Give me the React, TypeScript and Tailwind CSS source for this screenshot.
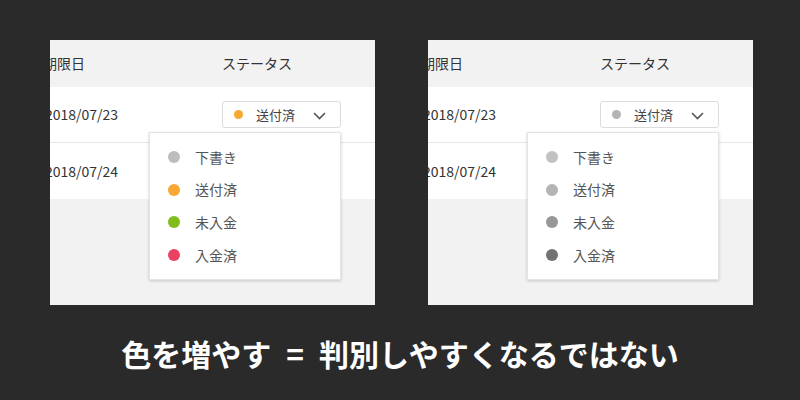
const font = { fontFamily: '"Noto Sans CJK JP", "Noto Sans", sans-serif' };

type Item = { label: string; color: string };

const colored: Item[] = [
  { label: "下書き", color: "bg-[#bdbdbd]" },
  { label: "送付済", color: "bg-[#f7a833]" },
  { label: "未入金", color: "bg-[#7fbc1c]" },
  { label: "入金済", color: "bg-[#e9415f]" },
];

const grey: Item[] = [
  { label: "下書き", color: "bg-[#c2c2c2]" },
  { label: "送付済", color: "bg-[#b4b4b4]" },
  { label: "未入金", color: "bg-[#979797]" },
  { label: "入金済", color: "bg-[#727272]" },
];

const Chevron = () => (
  <svg width="13" height="8" viewBox="0 0 13 8" fill="none">
    <path d="M1 1l5.5 5.5L12 1" stroke="#555" strokeWidth="1.6" />
  </svg>
);

const Panel = ({ items, current }: { items: Item[]; current: string }) => (
  <div className="relative w-[325px] h-[265px] bg-[#f2f2f2] overflow-hidden flex flex-col">
    <div className="h-[47px] flex items-center text-[14px] text-[#333]">
      <div className="ml-[-7px] w-[179px] shrink-0">期限日</div>
      <div>ステータス</div>
    </div>
    <div className="h-[56px] bg-white border-b border-[#e6e6e6] flex items-center text-[14px] text-[#333]">
      <div className="ml-[-5px] w-[177px] shrink-0">2018/07/23</div>
      <div className="w-[119px] h-[27px] border border-[#dcdcdc] rounded-[3px] bg-white flex items-center pl-[11px] pr-[14px]">
        <span className={`w-[9px] h-[9px] rounded-full ${current}`} />
        <span className="ml-[13px] text-[13px] text-[#444]">送付済</span>
        <span className="ml-auto flex items-center pt-[2px]">
          <Chevron />
        </span>
      </div>
    </div>
    <div className="h-[56px] bg-white flex items-center text-[14px] text-[#333]">
      <div className="ml-[-5px] w-[177px] shrink-0">2018/07/24</div>
    </div>

    <div className="absolute left-[99px] top-[92px] w-[192px] py-[8px] bg-white border border-[#e4e4e4] shadow-[0_1px_3px_rgba(0,0,0,0.18)]">
      {items.map((it) => (
        <div key={it.label} className="h-[32.6px] flex items-center pl-[18px]">
          <span className={`w-[12px] h-[12px] rounded-full ${it.color}`} />
          <span className="ml-[15px] text-[14px] text-[#555]">{it.label}</span>
        </div>
      ))}
    </div>
  </div>
);

export default function App() {
  return (
    <div className="w-[800px] h-[400px] bg-[#2a2a2a] flex flex-col" style={font}>
      <div className="flex pl-[50px] pt-[40px] gap-[53px]">
        <Panel items={colored} current="bg-[#f7a833]" />
        <Panel items={grey} current="bg-[#b4b4b4]" />
      </div>
      <div className="flex-1 flex items-center justify-center">
        <div className="text-white font-bold text-[30px] leading-[40px]">
          色を増やす{"\u2002"}={"\u2002"}判別しやすくなるではない
        </div>
      </div>
    </div>
  );
}
